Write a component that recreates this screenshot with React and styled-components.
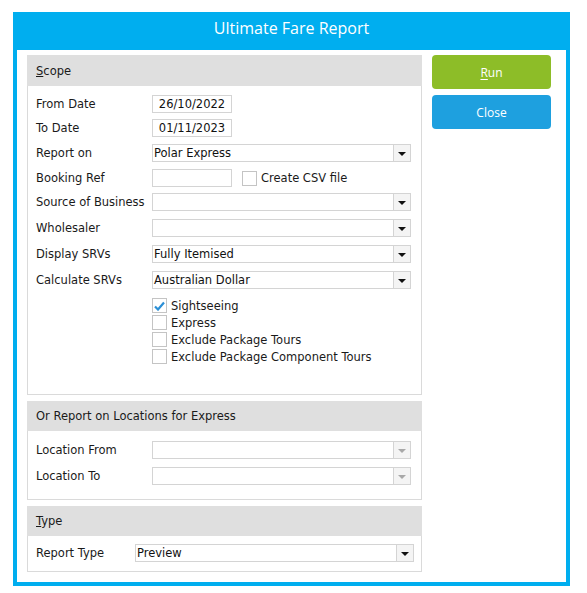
import styled, { createGlobalStyle } from "styled-components";

const GlobalStyle = createGlobalStyle`
  body {
    margin: 0;
    background: #ffffff;
    font-family: "DejaVu Sans", Verdana, sans-serif;
  }
`;

const Window = styled.div`
  margin: 12px 0 0 13px;
  width: 557px;
  background: #00aeef;
  padding: 0 4px 4px 4px;
  box-sizing: border-box;
`;

const TitleBar = styled.div`
  height: 38px;
  display: flex;
  align-items: center;
  justify-content: center;
  color: #ffffff;
  font-family: "Open Sans", sans-serif;
  font-size: 16px;
  padding-bottom: 6px;
  box-sizing: border-box;
`;

const Content = styled.div`
  background: #ffffff;
  display: flex;
  gap: 10px;
  padding: 5px 15px 10px 10px;
`;

const Panels = styled.div`
  width: 395px;
  display: flex;
  flex-direction: column;
  gap: 6px;
`;

const Panel = styled.div`
  border: 1px solid #dadada;
  display: flex;
  flex-direction: column;
  min-height: ${(p) => p.$minHeight || 0}px;
  box-sizing: border-box;
`;

const PanelHeader = styled.div`
  height: ${(p) => p.$height || 30}px;
  background: #dfdfdf;
  display: flex;
  align-items: center;
  padding-left: 9px;
  font-size: 11.5px;
  color: #1a1a1a;
  margin: -1px -1px 0 -1px;
`;

const PanelBody = styled.div`
  padding: ${(p) => p.$pad || "8px 10px 10px 8px"};
`;

const Row = styled.div`
  display: flex;
  align-items: center;
  height: 18px;
  margin-top: ${(p) => p.$mt || 0}px;
`;

const Label = styled.div`
  width: ${(p) => p.$width || 116}px;
  flex: none;
  font-size: 11.5px;
  color: #1a1a1a;
  white-space: nowrap;
`;

const TextBox = styled.div`
  width: 80px;
  height: 18px;
  box-sizing: border-box;
  border: 1px solid #d4d4d4;
  font-size: 11.5px;
  color: #111111;
  display: flex;
  align-items: center;
  justify-content: center;
`;

const Select = styled.div`
  width: ${(p) => p.$width || 260}px;
  height: 18px;
  box-sizing: border-box;
  border: 1px solid #d4d4d4;
  display: flex;
  align-items: stretch;
  font-size: 11.5px;
  color: #111111;
`;

const SelectValue = styled.div`
  flex: 1;
  display: flex;
  align-items: center;
  padding-left: 1px;
`;

const ArrowBox = styled.div`
  width: 16px;
  border-left: 1px solid #d4d4d4;
  background: #f4f4f4;
  display: flex;
  align-items: center;
  justify-content: center;
  &::after {
    content: "";
    border-left: 4px solid transparent;
    border-right: 4px solid transparent;
    border-top: 4px solid ${(p) => (p.$disabled ? "#a8a8a8" : "#111111")};
    margin-top: 1px;
  }
`;

const CheckRow = styled.label`
  display: flex;
  align-items: center;
  gap: 4px;
  height: 15px;
  margin-top: ${(p) => p.$mt || 0}px;
  margin-left: ${(p) => p.$ml || 0}px;
  font-size: 11.5px;
  color: #1a1a1a;
  white-space: nowrap;
`;

const Box = styled.span`
  width: 15px;
  height: 15px;
  box-sizing: border-box;
  border: 1px solid #c4c4c4;
  background: #ffffff;
  flex: none;
  display: flex;
  align-items: center;
  justify-content: center;
`;

const CheckList = styled.div`
  margin: 9px 0 0 116px;
  display: flex;
  flex-direction: column;
  gap: 2px;
  padding-bottom: 30px;
`;

const Buttons = styled.div`
  width: 119px;
  display: flex;
  flex-direction: column;
  gap: 6px;
`;

const Button = styled.div`
  height: 34px;
  border-radius: 4px;
  background: ${(p) => p.$bg};
  color: #ffffff;
  font-family: "Open Sans", sans-serif;
  font-size: 12px;
  display: flex;
  align-items: center;
  justify-content: center;
  u {
    text-underline-offset: 2px;
  }
`;

const Check = ({ checked, children, mt, ml }) => (
  <CheckRow $mt={mt} $ml={ml}>
    <Box>
      {checked && (
        <svg width="11" height="10" viewBox="0 0 11 10">
          <path d="M1 5.5 L4 8.5 L10 1.5" fill="none" stroke="#2b8fd6" strokeWidth="2.2" />
        </svg>
      )}
    </Box>
    {children}
  </CheckRow>
);

const Dropdown = ({ value, width, disabled }) => (
  <Select $width={width}>
    <SelectValue>{value}</SelectValue>
    <ArrowBox $disabled={disabled} />
  </Select>
);

export default function App() {
  return (
    <>
      <GlobalStyle />
      <Window>
        <TitleBar>Ultimate Fare Report</TitleBar>
        <Content>
          <Panels>
            <Panel $minHeight={340}>
              <PanelHeader $height={31}>
                <span>
                  <u>S</u>cope
                </span>
              </PanelHeader>
              <PanelBody $pad="9px 10px 0 8px">
                <Row>
                  <Label>From Date</Label>
                  <TextBox>26/10/2022</TextBox>
                </Row>
                <Row $mt={6}>
                  <Label>To Date</Label>
                  <TextBox>01/11/2023</TextBox>
                </Row>
                <Row $mt={7}>
                  <Label>Report on</Label>
                  <Dropdown value="Polar Express" />
                </Row>
                <Row $mt={7}>
                  <Label>Booking Ref</Label>
                  <TextBox />
                  <Check ml={10}>Create CSV file</Check>
                </Row>
                <Row $mt={6}>
                  <Label>Source of Business</Label>
                  <Dropdown value="" />
                </Row>
                <Row $mt={8}>
                  <Label>Wholesaler</Label>
                  <Dropdown value="" />
                </Row>
                <Row $mt={8}>
                  <Label>Display SRVs</Label>
                  <Dropdown value="Fully Itemised" />
                </Row>
                <Row $mt={8}>
                  <Label>Calculate SRVs</Label>
                  <Dropdown value="Australian Dollar" />
                </Row>
                <CheckList>
                  <Check checked>Sightseeing</Check>
                  <Check>Express</Check>
                  <Check>Exclude Package Tours</Check>
                  <Check>Exclude Package Component Tours</Check>
                </CheckList>
              </PanelBody>
            </Panel>
            <Panel>
              <PanelHeader>Or Report on Locations for Express</PanelHeader>
              <PanelBody $pad="10px 10px 14px 8px">
                <Row>
                  <Label>Location From</Label>
                  <Dropdown value="" disabled />
                </Row>
                <Row $mt={8}>
                  <Label>Location To</Label>
                  <Dropdown value="" disabled />
                </Row>
              </PanelBody>
            </Panel>
            <Panel>
              <PanelHeader>
                <span>
                  <u>T</u>ype
                </span>
              </PanelHeader>
              <PanelBody $pad="8px 7px 9px 8px">
                <Row>
                  <Label $width={99}>Report Type</Label>
                  <Dropdown value="Preview" width={279} />
                </Row>
              </PanelBody>
            </Panel>
          </Panels>
          <Buttons>
            <Button $bg="#8dbd28">
              <span>
                <u>R</u>un
              </span>
            </Button>
            <Button $bg="#1ea0df">Close</Button>
          </Buttons>
        </Content>
      </Window>
    </>
  );
}
